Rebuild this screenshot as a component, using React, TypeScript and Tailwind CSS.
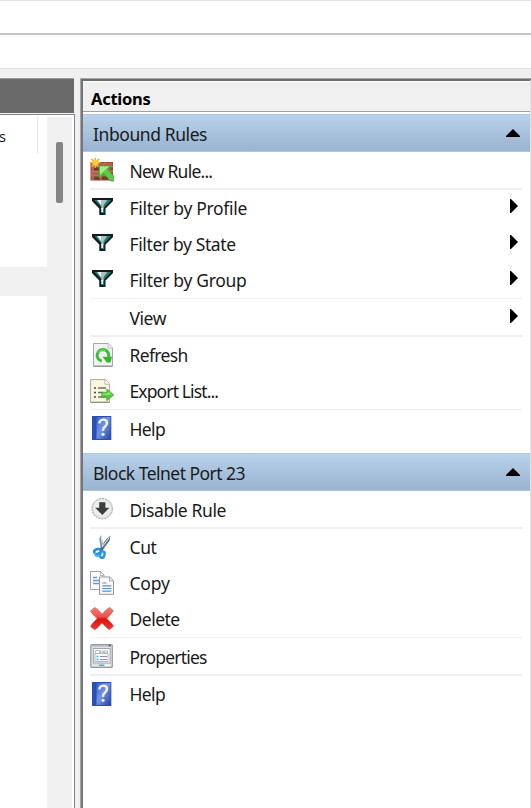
import type { ReactNode } from "react";

const Svg = ({ children }: { children: ReactNode }) => (
  <svg width="24" height="24" viewBox="0 0 24 24" className="block shrink-0">{children}</svg>
);

const FirewallIcon = () => (
  <Svg>
    <rect x="0.5" y="4" width="22.5" height="18.5" fill="#9d4a38" />
    <path d="M1 5h5v3H1zM8 5h6v3H8zM16 5h6v3h-6zM1 14h5v3H1zM8 14h6v3H8z" fill="#b9604a" />
    <path d="M4 9.5h6v3H4zM12 9.5h6v3h-6zM4 18.5h6v3H4zM12 18.5h6v3h-6z" fill="#7d3529" />
    <path d="M0.5 8.7h22.5M0.5 13.3h22.5M0.5 17.8h22.5M7 4v4.700M15 4v4.700M11 9v4M19 9v4M7 13.500v4M15 13.500v4M3 9v4M3 18v4M11 18v4" stroke="#c59384" strokeWidth="0.8" />
    <path d="M5.300-.5v10.500M0 4.700h10.600M1.500 1l7.600 7.500M9.100 1L1.500 8.500" stroke="#f5a21b" strokeWidth="1.300" />
    <circle cx="5.300" cy="4.700" r="3.100" fill="#ffc640" />
    <path d="M9 7.500h12.200l-3.500 3.700 6.200 7.100v4.700h-3.500l-6.600-7.200-4.800 4.500z" fill="#5bcb48" stroke="#379c2b" strokeWidth=".7" />
    <path d="M10 8.500h9l-3.300 3-5.700 5z" fill="#a3ef86" />
  </Svg>
);

const FilterIcon = () => (
  <Svg>
    <path d="M2 2h21v3l-7.500 7.500V19H9.300v-6.500L2 5z" fill="#17191a" />
    <path d="M4.500 4h16.500l-6.800 7.200v5.800h-3v-5.800z" fill="#168783" />
    <path d="M7 4H17l-3.500 5.500v3.500h-2v-3z" fill="#b9bcbd" />
    <path d="M7.500 4h3.500v5zM11.300 12h1.700v4h-1.700z" fill="#f4f8f8" />
  </Svg>
);

const RefreshIcon = () => (
  <Svg>
    <path d="M3.500.5h14.700l4.300 4.300v18.700h-19z" fill="#f0f2f4" stroke="#a4a8aa" />
    <path d="M18 .8v4.400h4.300" fill="#fff" stroke="#b7babb" />
    <path d="M4 23h18" stroke="#8d9091" />
    <path d="M11.800 18A5.800 5.800 0 1 1 18.500 14" fill="none" stroke="#3fbb35" strokeWidth="3" />
    <path d="M8.100 9.800a5 5 0 0 1 7.500-2" fill="none" stroke="#83dc6f" />
    <path d="M12.500 13.800h9.500l-1.500 5.700h-3.700z" fill="#36b52e" />
  </Svg>
);

const ExportIcon = () => (
  <Svg>
    <path d="M.6.6h14.800l4 4.300v18.600H.6z" fill="#fcf7dc" stroke="#aaa79b" />
    <path d="M15 .8v4.500h4.300" fill="#fff" stroke="#bbb9b0" />
    <path d="M.8 23.200h18.500" stroke="#88857b" />
    <path d="M4 9h2M4 13.500h2M4 18h2" stroke="#45484a" strokeWidth="1.600" />
    <path d="M8 9h8M8 13.500h5M8 18h8" stroke="#666c70" strokeWidth="1.300" />
    <path d="M11.800 13.300h5V10l7 5.900-7 5.800v-3.500h-5z" fill="#55c640" stroke="#3da52f" strokeWidth=".7" />
    <path d="M12.800 14.400h5v-2l4 3.300h-9z" fill="#9ce875" />
  </Svg>
);

const HelpIcon = () => (
  <Svg>
    <defs>
      <linearGradient id="book" x1="0" y1="0" x2="1" y2="1">
        <stop stopColor="#3c63cd" /><stop offset=".45" stopColor="#7095e0" /><stop offset="1" stopColor="#2445a8" />
      </linearGradient>
    </defs>
    <rect x="2" width="19.300" height="24" fill="#2b4bad" />
    <rect x="6.500" y="1" width="14" height="22" fill="url(#book)" />
    <path d="M4 0v24" stroke="#2453bd" strokeWidth="2" />
    <path d="M9.400 7.600c.1-5.100 7.700-5.200 7.600-.6 0 3.900-4.500 3.700-4 7.900" fill="none" stroke="#f3f5fb" strokeWidth="2.400" />
    <circle cx="13" cy="18.300" r="1.600" fill="#f3f5fb" />
  </Svg>
);

const DisableIcon = () => (
  <Svg>
    <circle cx="12.200" cy="11.700" r="10.300" fill="#dedfdf" stroke="#a4a4a4" strokeWidth="1" strokeDasharray="2 1" />
    <circle cx="12.200" cy="11.200" r="8.600" fill="#ededed" />
    <path d="M9.200 5.200h6.200v5.600h3.900l-7 7.300-7.100-7.300h4z" fill="#3b3d3e" />
  </Svg>
);

const CutIcon = () => (
  <Svg>
    <path d="M11 0l3 11.500-3 3.700L9.200 4z" fill="#8295a5" />
    <path d="M20.500.5l-.8 5.200-7.500 10-2.500-1.500 6-9.500z" fill="#64798a" />
    <path d="M11.200 2l1.500 9M19.300 2.500l-7.500 9.800" stroke="#d8e4ec" strokeWidth="1" />
    <ellipse cx="7.500" cy="16.500" rx="3.400" ry="2.300" transform="rotate(-20 7.500 16.500)" fill="none" stroke="#238fdf" strokeWidth="2.600" />
    <ellipse cx="12.300" cy="19.600" rx="2.200" ry="3.300" transform="rotate(12 12.300 19.600)" fill="none" stroke="#2795e2" strokeWidth="2.500" />
    <path d="M5 17.700c-.6 3 2 4.400 4.700 2.400" fill="none" stroke="#54b6ed" strokeWidth="2" />
    <circle cx="12" cy="13.500" r="1.300" fill="#3b6381" />
  </Svg>
);

const CopyIcon = () => (
  <Svg>
    <path d="M.5.5h10L14 4v14.500H.5z" fill="#f9fafb" stroke="#9fa3a6" />
    <path d="M10.300.7v3.800h3.500" fill="none" stroke="#afb2b4" />
    <path d="M3 6.500h4M3 9.500h7M3 12.500h7" stroke="#6a9bc8" strokeWidth="1.300" />
    <path d="M9.500 6h10.300l3.700 3.700v13.600h-14z" fill="#f9fafb" stroke="#929699" />
    <path d="M19.500 6.200V10h3.800" fill="none" stroke="#a4a8aa" />
    <path d="M12.300 12h4M12.300 14.800h9M12.300 17.500h9M12.300 20.200h9" stroke="#568fc5" strokeWidth="1.200" />
  </Svg>
);

const DeleteIcon = () => (
  <Svg>
    <defs><linearGradient id="cross" x2="0" y2="1"><stop stopColor="#f47c71" /><stop offset=".42" stopColor="#ef4e48" /><stop offset=".52" stopColor="#e3110e" /><stop offset="1" stopColor="#e83a32" /></linearGradient></defs>
    <path d="M4.700.5c3 1.400 5.200 4.300 7.500 6.800C14.500 4.500 17 1.700 19.700.5l3.700 3.300c-1.800 2.900-4.500 5.300-6.700 7.800 2.600 2.400 5.300 4.800 6.800 7.600l-4 3.500c-2.800-1.500-5-4.300-7.500-6.800-2.400 2.600-4.500 5.300-7.400 6.900L.5 19.400c1.600-2.900 4.300-5.400 6.700-7.800C4.700 9.200 2 6.700.5 4z" fill="url(#cross)" stroke="#cb5a54" strokeWidth=".7" />
  </Svg>
);

const PropertiesIcon = () => (
  <Svg>
    <rect x=".8" y=".6" width="21.500" height="22.800" rx="1" fill="#dfe2e5" stroke="#93999e" strokeWidth="1.200" />
    <path d="M1.500 1.800h20" stroke="#b2b7bc" strokeWidth="1.500" />
    <path d="M18.500 1.600h2.500" stroke="#4e5a66" strokeWidth="1.300" />
    <rect x="3.400" y="4.500" width="16.700" height="14.500" fill="#fff" stroke="#a0a7ac" />
    <path d="M5 9.500h13v8H5z" fill="#f8fafb" stroke="#b2b9be" />
    <path d="M5.500 6.500h4v3h-4zM10.500 7h3v2h-3zM14.500 7h3v2h-3z" fill="#fff" stroke="#a5adb3" strokeWidth=".8" />
    <path d="M6.500 12.500h2M6.500 15.500h2M9 21.300h5" stroke="#35bde8" strokeWidth="1.600" />
    <path d="M10 12.500h7M10 15.500h7" stroke="#87949d" strokeWidth="1.200" />
    <path d="M15.500 21.300h4" stroke="#fff" strokeWidth="1.500" />
  </Svg>
);

function Section({ title, tracking }: { title: string; tracking: string }) {
  return (
    <div className="flex h-[38px] items-center justify-between border-y border-[#aec7df] bg-linear-to-b from-[#b9d1ea] to-[#99b4d1] pr-[10px] pl-[10px]">
      <span className={`relative top-px whitespace-nowrap text-[17.500px] leading-6 ${tracking}`}>{title}</span>
      <svg width="14" height="8" viewBox="0 0 14 8"><path d="M7 0l7 7v1H0V7z" fill="#000" /></svg>
    </div>
  );
}

function Action({ label, tracking, icon, submenu }: { label: string; tracking: string; icon?: ReactNode; submenu?: boolean }) {
  return (
    <div className="flex h-9 items-center pr-3 pl-[7px]">
      <div className="mr-[15.500px] w-6 shrink-0">{icon}</div>
      <span className={`relative top-[0.5px] flex-1 whitespace-nowrap text-[17.500px] leading-6 ${tracking}`}>{label}</span>
      {submenu && <svg width="8" height="14" viewBox="0 0 8 14" className="mb-[3px]"><path d="M0 0h1l7 7-7 7H0z" fill="#000" /></svg>}
    </div>
  );
}

const Separator = () => <div className="mr-2 ml-[7px] h-[1.500px] bg-[#f0f0f0]" />;

export default function App() {
  return (
    <div className="flex h-[808px] w-[531px] flex-col overflow-hidden bg-[#f0f0f0] font-['Noto_Sans',sans-serif] text-[#1a1a1a]">
      <div className="h-[35px] shrink-0 border-t border-b-2 border-t-[#e3e3e3] border-b-[#c4c4cc] bg-white" />
      <div className="mb-[10px] h-[34px] shrink-0 border-b border-[#dfdfdf] bg-white" />
      <div className="-mt-px flex min-h-0 flex-1">
        <div className="flex w-[75px] shrink-0 flex-col">
          <div className="mr-px h-[35px] shrink-0 border-t border-[#999] bg-[#696969]" />
          <div className="mt-px flex flex-1 border-t border-r border-[#82828e] bg-white">
            <div className="flex w-[47px] flex-col">
              <div className="mt-[2px] flex h-[36px] w-[38px] items-center border-r border-[#e5e5e5] tracking-[-1px]"><span className="relative top-[2px] -ml-px w-2 text-[14.500px]">s</span></div>
              <div className="mt-[114px] h-[29px] bg-[#f0f0f0]" />
            </div>
            <div className="mt-[2px] w-[25px] bg-[#f0f0f0] pt-[25px] pl-[9px]">
              <div className="h-[61px] w-[7px] rounded-[2px] bg-[#858585]" />
            </div>
          </div>
        </div>
        <div className="ml-[5px] flex min-w-0 flex-1 border-t border-l border-[#a6a6a6]">
          <div className="flex flex-1 flex-col border-t-2 border-r border-l-2 border-t-[#6d6d6d] border-r-[#e3e3e3] border-l-[#757575] bg-white">
            <div className="mt-px mb-[2px] flex h-[30px] items-center border-b border-[#a0a0a0] bg-[#f0f0f0] pl-[8px] text-[16.500px] font-bold text-black"><span className="relative top-[3px] tracking-[-0.25px]">Actions</span></div>
            <Section title="Inbound Rules" tracking="tracking-[-0.42px]" />
            <Action label="New Rule..." tracking="tracking-[-0.78px]" icon={<FirewallIcon />} />
            <Separator />
            <Action label="Filter by Profile" tracking="tracking-[-0.32px]" icon={<FilterIcon />} submenu />
            <Action label="Filter by State" tracking="tracking-[-0.38px]" icon={<FilterIcon />} submenu />
            <Action label="Filter by Group" tracking="tracking-[-0.32px]" icon={<FilterIcon />} submenu />
            <Separator />
            <Action label="View" tracking="tracking-[-0.45px]" submenu />
            <Separator />
            <Action label="Refresh" tracking="tracking-[-0.65px]" icon={<RefreshIcon />} />
            <Action label="Export List..." tracking="tracking-[-0.88px]" icon={<ExportIcon />} />
            <Separator />
            <Action label="Help" tracking="tracking-[-0.65px]" icon={<HelpIcon />} />
            <div className="h-[7px]" />
            <Section title="Block Telnet Port 23" tracking="tracking-[-0.52px]" />
            <Action label="Disable Rule" tracking="tracking-[-0.4px]" icon={<DisableIcon />} />
            <Separator />
            <Action label="Cut" tracking="tracking-[-0.4px]" icon={<CutIcon />} />
            <Action label="Copy" tracking="tracking-[-0.2px]" icon={<CopyIcon />} />
            <Action label="Delete" tracking="tracking-[-0.5px]" icon={<DeleteIcon />} />
            <Separator />
            <Action label="Properties" tracking="tracking-[-0.78px]" icon={<PropertiesIcon />} />
            <Separator />
            <Action label="Help" tracking="tracking-[-0.65px]" icon={<HelpIcon />} />
          </div>
        </div>
      </div>
    </div>
  );
}
